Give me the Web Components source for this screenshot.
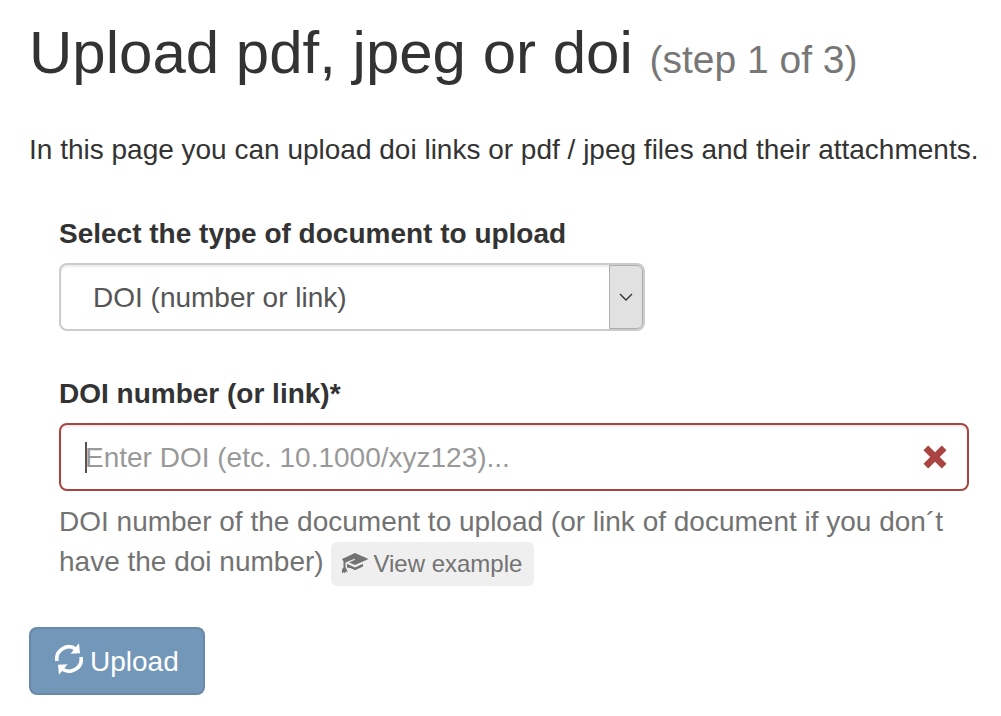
<!DOCTYPE html>
<html lang="en">
<head>
<meta charset="utf-8">
<meta name="viewport" content="width=device-width, initial-scale=1">
<title>Upload pdf, jpeg or doi</title>
<style>
body { margin: 0; background: #fff; color: #333; font: 28px/40px "Liberation Sans", Arial, sans-serif; }
</style>
</head>
<body>
<upload-page></upload-page>
<script>
const icons = {
  remove: ['0 0 24 24', '<path fill="currentColor" d="M5.2 .5 12 7.200 18.800 .5 23.500 5.200 16.800 12 23.500 18.800 18.800 23.500 12 16.800 5.200 23.500 .5 18.800 7.200 12 .5 5.200Z"/>'],
  education: ['0 0 28 24', '<path fill="currentColor" d="M14 1 27.500 7 14 13 8 10.400 14 7.800 13.500 6.700 4.500 10.500V15L5.200 16.500 7 20.500 5 19.200 4 21.500 3 20 1 21.500V17.500L2.500 15.500V9.500L1 7ZM6 11.700 14 15.400 22 11.700V14.500L14 18.300 10 16.200 6 15.500Z"/>'],
  refresh: ['0 0 28 32', '<g fill="none" stroke="currentColor" stroke-width="3.6"><path d="M2 18A12 12 0 0 1 21 6.300"/><path d="M26 14A12 12 0 0 1 7 25.700"/></g><path fill="currentColor" d="M24 .3 25 10.300 15.500 10.800ZM4 31.700 3 21.700 12.500 21.200Z"/>']
};

class GlyphIcon extends HTMLElement {
  connectedCallback() {
    const [box, shape] = icons[this.getAttribute('name')];
    this.attachShadow({ mode: 'open' }).innerHTML = `
      <style>
        :host { display: inline-block; line-height: 0; }
        svg { display: block; width: 100%; height: 100%; }
      </style>
      <svg viewBox="${box}" aria-hidden="true">${shape}</svg>`;
  }
}

class PageHeading extends HTMLElement {
  connectedCallback() {
    this.attachShadow({ mode: 'open' }).innerHTML = `
      <style>
        :host { display: block; }
        h1 { margin: 0; font-size: 60px; line-height: 66px; font-weight: 400; }
        small { font-size: 39px; line-height: 39px; color: #777; }
      </style>
      <h1><slot></slot> <small><slot name="step"></slot></small></h1>`;
  }
}

class DocumentType extends HTMLElement {
  connectedCallback() {
    this.attachShadow({ mode: 'open' }).innerHTML = `
      <style>
        :host { display: block; }
        label { display: block; margin-bottom: 9px; font-weight: 700; }
        .box { position: relative; max-width: 586px; }
        select { appearance: none; display: block; box-sizing: border-box; width: 100%; height: 68px; margin: 0;
          padding: 2px 48px 0 32px; border: 2px solid #ccc; border-radius: 8px; background: #fff; color: #555;
          font: inherit; box-shadow: inset 0 2px 2px rgba(0,0,0,.075); }
        .arrow { position: absolute; top: 2px; right: 2px; bottom: 2px; box-sizing: border-box; width: 34px;
          display: grid; place-items: center; background: #e1e1e1; border: 1px solid #adadad;
          border-radius: 0 6px 6px 0; pointer-events: none; }
        svg { width: 14px; height: 8px; }
      </style>
      <label for="type">Select the type of document to upload</label>
      <div class="box">
        <select id="type"><option>DOI (number or link)</option><option>PDF</option><option>JPEG</option></select>
        <span class="arrow"><svg viewBox="0 0 14 8" aria-hidden="true"><path d="M1 1 7 7 13 1" fill="none" stroke="#333" stroke-width="1.400"/></svg></span>
      </div>`;
  }
}

class DoiField extends HTMLElement {
  connectedCallback() {
    this.attachShadow({ mode: 'open' }).innerHTML = `
      <style>
        :host { display: block; }
        label { display: block; margin-bottom: 9px; font-weight: 700; }
        .box { position: relative; }
        input { display: block; box-sizing: border-box; width: 100%; height: 68px; margin: 0; padding: 2px 84px 0 24px;
          border: 2px solid #a94442; border-radius: 8px; color: #555; font: inherit; outline: 0; caret-color: transparent;
          box-shadow: inset 0 2px 2px rgba(0,0,0,.075);
          background: #fff linear-gradient(#555, #555) 24px center / 2px 31px no-repeat; }
        input::placeholder { color: #999; opacity: 1; }
        glyph-icon { position: absolute; top: 22px; right: 22px; width: 24px; height: 24px; color: #a94442; pointer-events: none; }
        p { margin: 11px 0 0; color: #737373; }
      </style>
      <label for="doi">DOI number (or link)*</label>
      <div class="box">
        <input id="doi" type="text" placeholder="Enter DOI (etc. 10.1000/xyz123)..." aria-invalid="true" aria-describedby="help">
        <glyph-icon name="remove"></glyph-icon>
      </div>
      <p id="help"><slot></slot></p>`;
  }
}

class ExampleButton extends HTMLElement {
  connectedCallback() {
    this.attachShadow({ mode: 'open' }).innerHTML = `
      <style>
        :host { display: inline-block; vertical-align: top; }
        button { display: flex; align-items: center; gap: 4px; height: 44px; margin: 0; padding: 0 12px 0 10px; border: 0;
          border-radius: 6px; background: #efefef; color: #737373; font: inherit; font-size: 24px; line-height: 36px; }
        glyph-icon { width: 28px; height: 24px; }
      </style>
      <button type="button"><glyph-icon name="education"></glyph-icon><slot></slot></button>`;
  }
}

class UploadButton extends HTMLElement {
  connectedCallback() {
    this.attachShadow({ mode: 'open' }).innerHTML = `
      <style>
        :host { display: block; }
        button { display: flex; align-items: center; gap: 7px; height: 68px; margin: 0; padding: 2px 24px 0; border: 2px solid #6889a7;
          border-radius: 8px; background: #7297b8; color: #fff; font: inherit; }
        glyph-icon { width: 28px; height: 32px; margin-bottom: 6px; }
      </style>
      <button type="submit"><glyph-icon name="refresh"></glyph-icon><slot></slot></button>`;
  }
}

class UploadPage extends HTMLElement {
  connectedCallback() {
    this.attachShadow({ mode: 'open' }).innerHTML = `
      <style>
        :host { display: block; padding: 20px 0 21px 29px; }
        .intro { margin: 44px 0; }
        .fields { display: grid; gap: 43px; padding: 0 32px 0 30px; }
        form { display: grid; gap: 41px; }
      </style>
      <page-heading>Upload pdf, jpeg or doi<span slot="step">(step 1 of 3)</span></page-heading>
      <p class="intro">In this page you can upload doi links or pdf / jpeg files and their attachments.</p>
      <form>
        <div class="fields">
          <document-type></document-type>
          <doi-field>DOI number of the document to upload (or link of document if you don´t have the doi number) <example-button>View example</example-button></doi-field>
        </div>
        <upload-button>Upload</upload-button>
      </form>`;
  }
}

customElements.define('glyph-icon', GlyphIcon);
customElements.define('page-heading', PageHeading);
customElements.define('document-type', DocumentType);
customElements.define('doi-field', DoiField);
customElements.define('example-button', ExampleButton);
customElements.define('upload-button', UploadButton);
customElements.define('upload-page', UploadPage);
</script>
</body>
</html>
